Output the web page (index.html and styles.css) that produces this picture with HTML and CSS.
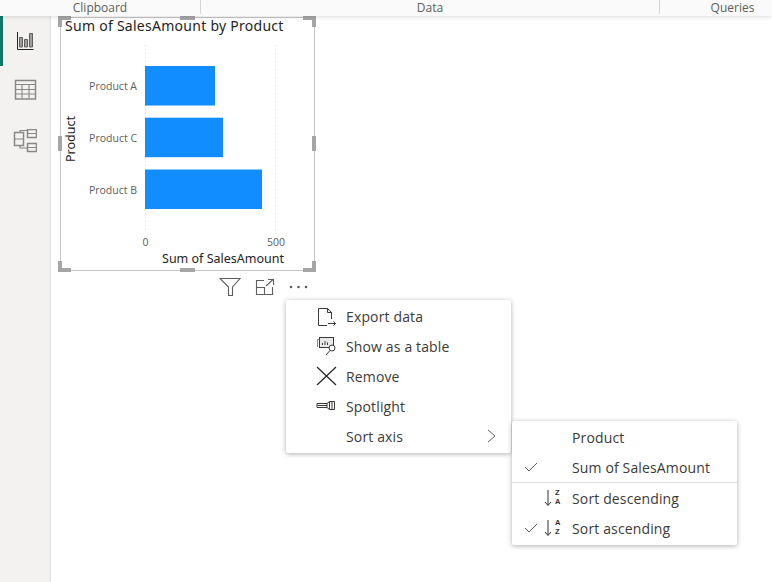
FILE: index.html
```html
<!DOCTYPE html>
<html lang="en">
<head>
<meta charset="utf-8">
<title>Report</title>
<link rel="stylesheet" href="styles.css">
</head>
<body>
<header class="ribbon">
  <div class="group g-clip">Clipboard</div>
  <div class="group g-data">Data</div>
  <div class="group g-queries">Queries</div>
</header>
<div class="main">
  <nav class="rail">
    <div class="rail-item active">
      <svg width="24" height="24" viewBox="0 0 24 24" fill="none" stroke="#252423" stroke-width="1"><path d="M2.500 3V20.500H18.500"/><path d="M4.500 8.500h3v9.500h-3zM9.500 10.500h3v7.500h-3zM14.500 4.500h3v13.500h-3z" fill="#a19f9d" stroke="#605e5c"/></svg>
    </div>
    <div class="rail-item">
      <svg width="24" height="24" viewBox="0 0 24 24" fill="none" stroke="#8a8886" stroke-width="1"><rect x="2.500" y="1.500" width="20" height="18.500" stroke-width="1.500"/><path d="M3 5.500H22M3 10.500H22M3 15H22M9 6V20M16 6V20" stroke-width="1.100"/></svg>
    </div>
    <div class="rail-item">
      <svg width="24" height="24" viewBox="0 0 24 24" fill="none" stroke="#8a8886" stroke-width="1.500"><rect x="1.500" y="3.500" width="9" height="13"/><rect x="14.500" y="0.500" width="9" height="8"/><rect x="14.500" y="14.500" width="9" height="8"/><path d="M1.500 10h9M14.500 4.500h9M14.500 18.500h9M7 3.500V1.500H14.500M7 16.500V19H14.500" stroke-width="1.200"/></svg>
    </div>
  </nav>
  <main class="canvas">
    <section class="visual">
      <span class="corner tl"></span><span class="corner tr"></span><span class="corner bl"></span><span class="corner br"></span>
      <span class="grip g-top"></span><span class="grip g-bottom"></span><span class="grip g-left"></span><span class="grip g-right"></span>
      <h2 class="title">Sum of SalesAmount by Product</h2>
      <svg class="chart" width="255" height="225" viewBox="0 0 255 225">
        <path class="grid" d="M85.500 4V189M215.500 4V189"/>
        <g class="cats">
          <text x="77" y="49" text-anchor="end">Product A</text>
          <text x="77" y="101" text-anchor="end">Product C</text>
          <text x="77" y="153" text-anchor="end">Product B</text>
        </g>
        <rect class="bar" x="85" y="25" width="70" height="39.500"/>
        <rect class="bar" x="85" y="76.700" width="78" height="39.500"/>
        <rect class="bar" x="85" y="128.500" width="117" height="39.500"/>
        <g class="ticks">
          <text x="85.500" y="205" text-anchor="middle">0</text>
          <text x="216" y="205" text-anchor="middle">500</text>
        </g>
        <text class="axis" x="224" y="222" text-anchor="end">Sum of SalesAmount</text>
        <text class="axis" transform="translate(15 121) rotate(-90)" x="0" y="0">Product</text>
      </svg>
    </section>
    <div class="visual-tools">
      <svg width="22" height="20" viewBox="0 0 22 20" fill="none" stroke="#605e5c" stroke-width="1.100"><path d="M1 1.500H21L13.500 10V18.500H9.500V10Z"/></svg>
      <svg width="20" height="18" viewBox="0 0 20 18" fill="none" stroke="#605e5c" stroke-width="1.100"><path d="M9 2.500H1.500V16.500H17.500V9M1.500 9.500H9.500V16.500M11 8L18 1.500M13 1.500H18.500V7"/></svg>
      <svg width="20" height="4" viewBox="0 0 20 4" fill="#605e5c"><circle cx="2" cy="2" r="1.300"/><circle cx="9.500" cy="2" r="1.300"/><circle cx="17" cy="2" r="1.300"/></svg>
    </div>
    <ul class="menu menu-main">
      <li class="item">
        <svg class="ico" width="22" height="22" viewBox="0 0 22 22" fill="none" stroke="#3b3a39" stroke-width="1"><path d="M3.500 3.500H12.500L16.500 7.500V14M12.500 3.500V7.500H16.500M3.500 3.500V20.500H12M13 18.500H20.500M18.500 16.500L20.500 18.500L18.500 20.500"/></svg>
        <span>Export data</span>
      </li>
      <li class="item">
        <svg class="ico" width="22" height="22" viewBox="0 0 22 22" fill="none" stroke="#3b3a39" stroke-width="1"><path d="M2.500 12V4.500H14" stroke="#8a8886"/><rect x="4.500" y="2.500" width="14" height="10" fill="#e8e8e8"/><path d="M7.500 10V8M10 10V6M12.500 10V7.500"/><circle cx="17" cy="13" r="3" fill="#fff"/><path d="M15 15.500L11 20"/></svg>
        <span>Show as a table</span>
      </li>
      <li class="item">
        <svg class="ico" width="22" height="22" viewBox="0 0 22 22" fill="none" stroke="#252423" stroke-width="1.200"><path d="M2 2L21 20M21 2L2 20"/></svg>
        <span>Remove</span>
      </li>
      <li class="item">
        <svg class="ico" width="22" height="22" viewBox="0 0 22 22" fill="none" stroke="#3b3a39" stroke-width="1"><path d="M2 8.500H12V12.500H2ZM2.500 10.500H12M12 8.500L14.500 6.500V14.500L12 12.500M14.500 6.500H19.500V14.500H14.500M17 6.500V14.500"/></svg>
        <span>Spotlight</span>
      </li>
      <li class="item">
        <span class="ico"></span>
        <span>Sort axis</span>
        <svg class="chev" width="10" height="14" viewBox="0 0 10 14" fill="none" stroke="#605e5c" stroke-width="1"><path d="M1 1L8 7L1 13"/></svg>
      </li>
    </ul>
    <ul class="menu menu-sub">
      <li class="sub"><span class="check"></span><span class="sort"></span><span>Product</span></li>
      <li class="sub">
        <span class="check"><svg width="14" height="10" viewBox="0 0 14 10" fill="none" stroke="#605e5c"><path d="M1 5L5 9L13 1"/></svg></span>
        <span class="sort"></span><span>Sum of SalesAmount</span>
      </li>
      <li class="sep"></li>
      <li class="sub">
        <span class="check"></span>
        <span class="sort"><svg width="8" height="18" viewBox="0 0 8 18" fill="none" stroke="#323130"><path d="M4 1V16M1 13L4 16.500L7 13"/></svg><span class="az"><b>Z</b><b>A</b></span></span>
        <span>Sort descending</span>
      </li>
      <li class="sub">
        <span class="check"><svg width="14" height="10" viewBox="0 0 14 10" fill="none" stroke="#605e5c"><path d="M1 5L5 9L13 1"/></svg></span>
        <span class="sort"><svg width="8" height="18" viewBox="0 0 8 18" fill="none" stroke="#323130"><path d="M4 1V16M1 13L4 16.500L7 13"/></svg><span class="az"><b>A</b><b>Z</b></span></span>
        <span>Sort ascending</span>
      </li>
    </ul>
  </main>
</div>
</body>
</html>
```
FILE: styles.css
```css
* { box-sizing: border-box; }
html, body { margin: 0; height: 100%; }
body {
  width: 772px; height: 582px; overflow: hidden; background: #fff;
  font-family: "Open Sans", "Noto Sans", sans-serif; color: #323130;
  display: flex; flex-direction: column;
}
.ribbon {
  position: relative; z-index: 2; flex: 0 0 16px; display: grid;
  grid-template-columns: 201px 459px 112px; background: #fafafa;
  box-shadow: 0 1px 4px rgba(0,0,0,.14);
  font-size: 12px; line-height: 15px; color: #605e5c;
}
.group { height: 14px; text-align: center; }
.g-clip { border-right: 1px solid #d8d6d4; }
.g-data { border-right: 1px solid #d8d6d4; }
.g-queries { padding-left: 33px; }
.main { flex: 1; display: flex; min-height: 0; }
.rail {
  flex: 0 0 51px; background: #f3f2f1; border-right: 1px solid #e1dfdd;
  display: flex; flex-direction: column;
}
.rail-item { height: 50px; display: flex; align-items: center; justify-content: center; }
.rail-item.active { border-left: 3px solid #117865; }
.canvas { position: relative; flex: 1; }
.visual {
  position: absolute; left: 9px; top: 1px; width: 255px; height: 254px;
  border: 1px solid #c8c6c4; background: #fff;
}
.title {
  margin: 0; height: 21px; padding-left: 4px;
  font: 400 14px/16px "Noto Sans", sans-serif; color: #252423; letter-spacing: .27px; white-space: nowrap;
}
.chart { display: block; margin-top: 2px; margin-left: -1px; }
.grid { stroke: #d9d9d9; stroke-dasharray: 1 3; fill: none; }
.bar { fill: #118dff; }
.cats text, .ticks text { font-family: "Open Sans", sans-serif; font-size: 10.500px; fill: #605e5c; }
.axis { font-family: "Noto Sans", sans-serif; font-size: 12.500px; fill: #252423; }
.corner { position: absolute; width: 13px; height: 11px; border: 0 solid #a6a6a6; }
.tl { left: -3px; top: -2px; border-width: 4px 0 0 4px; }
.tr { right: -2px; top: -2px; border-width: 4px 4px 0 0; }
.bl { left: -3px; bottom: -2px; border-width: 0 0 4px 4px; }
.br { right: -2px; bottom: -2px; border-width: 0 4px 4px 0; }
.grip { position: absolute; background: #a6a6a6; }
.g-top, .g-bottom { width: 15px; height: 4px; left: 119px; }
.g-top { top: -2px; }
.g-bottom { bottom: -2px; }
.g-left, .g-right { width: 4px; height: 15px; top: 118px; }
.g-left { left: -3px; }
.g-right { right: -2px; }
.visual-tools { position: absolute; left: 168px; top: 261px; display: flex; align-items: center; gap: 14px; height: 20px; }
.menu {
  position: absolute; margin: 0; padding: 1px 0 0; list-style: none; width: 225px; background: #fff;
  border-radius: 2px; box-shadow: 0 1px 5px rgba(0,0,0,.32);
  font-size: 14px; color: #3b3a39; letter-spacing: .14px;
}
.menu-main { left: 235px; top: 284px; height: 153px; }
.menu-sub { left: 461px; top: 405px; height: 124px; z-index: 1; }
.item { height: 30px; display: flex; align-items: center; padding-left: 29px; position: relative; }
.ico { width: 22px; height: 22px; margin-right: 9px; flex: none; }
.chev { position: absolute; right: 14px; top: 8px; }
.sub { height: 30px; display: flex; align-items: center; padding-left: 12px; }
.check { width: 19px; height: 10px; display: block; line-height: 0; flex: none; }
.sort { width: 29px; flex: none; display: flex; align-items: center; padding-left: 1px; gap: 3px; }
.az { display: flex; flex-direction: column; letter-spacing: 0; }
.az b { display: block; font: 700 7.500px/8.700px "Liberation Sans", sans-serif; color: #323130; }
.sep { height: 1px; background: #e1dfdd; }
```
